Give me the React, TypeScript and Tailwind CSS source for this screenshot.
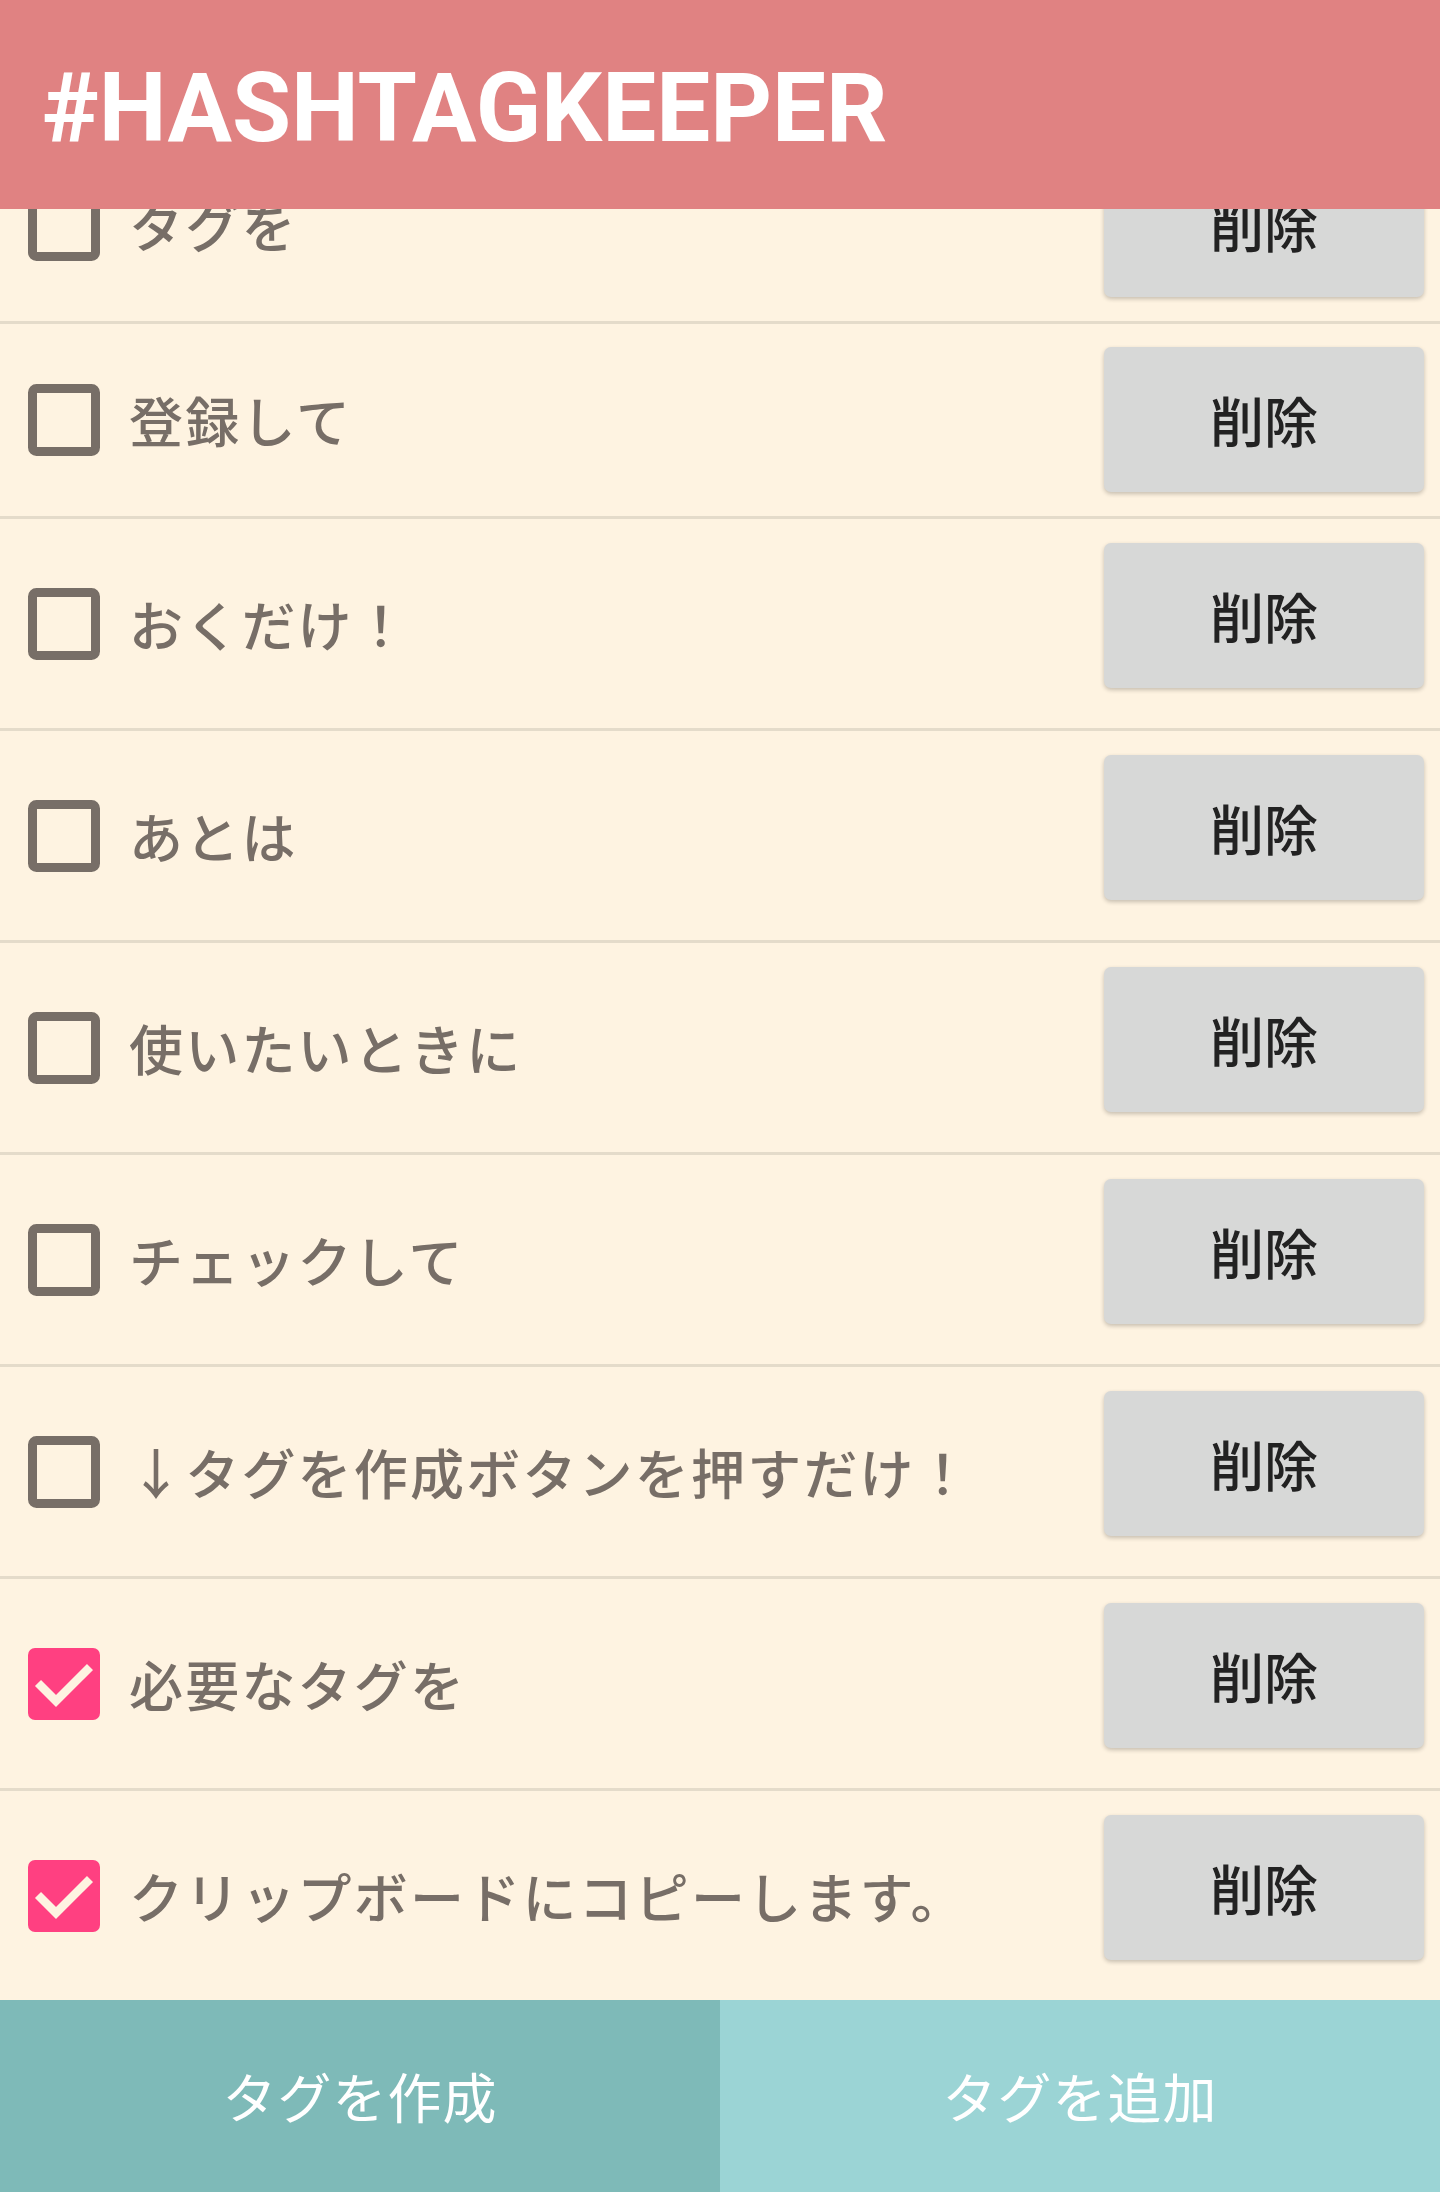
import React from "react";

type Item = { label: string; checked: boolean; short?: boolean };

const items: Item[] = [
  { label: "タグを", checked: false, short: true },
  { label: "登録して", checked: false, short: true },
  { label: "おくだけ！", checked: false },
  { label: "あとは", checked: false },
  { label: "使いたいときに", checked: false },
  { label: "チェックして", checked: false },
  { label: "↓タグを作成ボタンを押すだけ！", checked: false },
  { label: "必要なタグを", checked: true },
  { label: "クリップボードにコピーします。", checked: true },
];

const cjk = { fontFamily: '"Noto Sans CJK JP", "Noto Sans", sans-serif' };

function Box({ checked }: { checked: boolean }) {
  return (
    <svg width="72" height="72" viewBox="0 0 72 72" className="shrink-0">
      {checked ? (
        <>
          <rect x="0" y="0" width="72" height="72" rx="7" fill="#ff4081" />
          <polyline
            points="10,35 28,53 62,19"
            fill="none"
            stroke="#fef3e1"
            strokeWidth="8.5"
          />
        </>
      ) : (
        <rect
          x="4.5"
          y="4.5"
          width="63"
          height="63"
          rx="4"
          fill="none"
          stroke="#776e67"
          strokeWidth="9"
        />
      )}
    </svg>
  );
}

function Row({ item, last }: { item: Item; last: boolean }) {
  return (
    <div
      className={
        "flex items-center " +
        (last ? "" : "border-b-[3px] border-[#e4dbca]")
      }
    >
      <div className="ml-[28px]">
        <Box checked={item.checked} />
      </div>
      <div
        className="ml-[29px] text-[54px] leading-none font-medium tracking-[2.2px] text-[#776e67] whitespace-nowrap"
        style={cjk}
      >
        {item.label}
      </div>
      <button
        className={
          "ml-auto mr-[16px] w-[320px] h-[145px] shrink-0 rounded-[7px] bg-[#d7d8d7] shadow-[0_2px_4px_rgba(0,0,0,0.22)] flex items-center justify-center text-[54px] leading-none font-medium text-[#222222] " +
          (item.short ? "mt-[23px] mb-[24px]" : "mt-[24px] mb-[40px]")
        }
        style={cjk}
      >
        削除
      </button>
    </div>
  );
}

export default function App() {
  return (
    <div className="w-[1440px] h-[2192px] flex flex-col bg-[#fef3e1] overflow-hidden">
      <header className="h-[209px] shrink-0 bg-[#e08282] flex items-center pl-[42px] pt-[6px] relative z-10">
        <h1
          className="text-[96px] font-bold leading-none text-white"
          style={{ fontFamily: 'Roboto, "Liberation Sans", sans-serif' }}
        >
          #HASHTAGKEEPER
        </h1>
      </header>
      <main className="h-[1791px] shrink-0 overflow-hidden">
        <div className="-mt-[80px]">
          {items.map((it, i) => (
            <Row key={i} item={it} last={i === items.length - 1} />
          ))}
        </div>
      </main>
      <footer className="h-[192px] shrink-0 grid grid-cols-2">
        <button
          className="bg-[#7ebab8] text-white text-[54px] leading-none tracking-[1px] flex items-center justify-center"
          style={cjk}
        >
          タグを作成
        </button>
        <button
          className="bg-[#9bd4d5] text-white text-[54px] leading-none tracking-[1px] flex items-center justify-center"
          style={cjk}
        >
          タグを追加
        </button>
      </footer>
    </div>
  );
}
